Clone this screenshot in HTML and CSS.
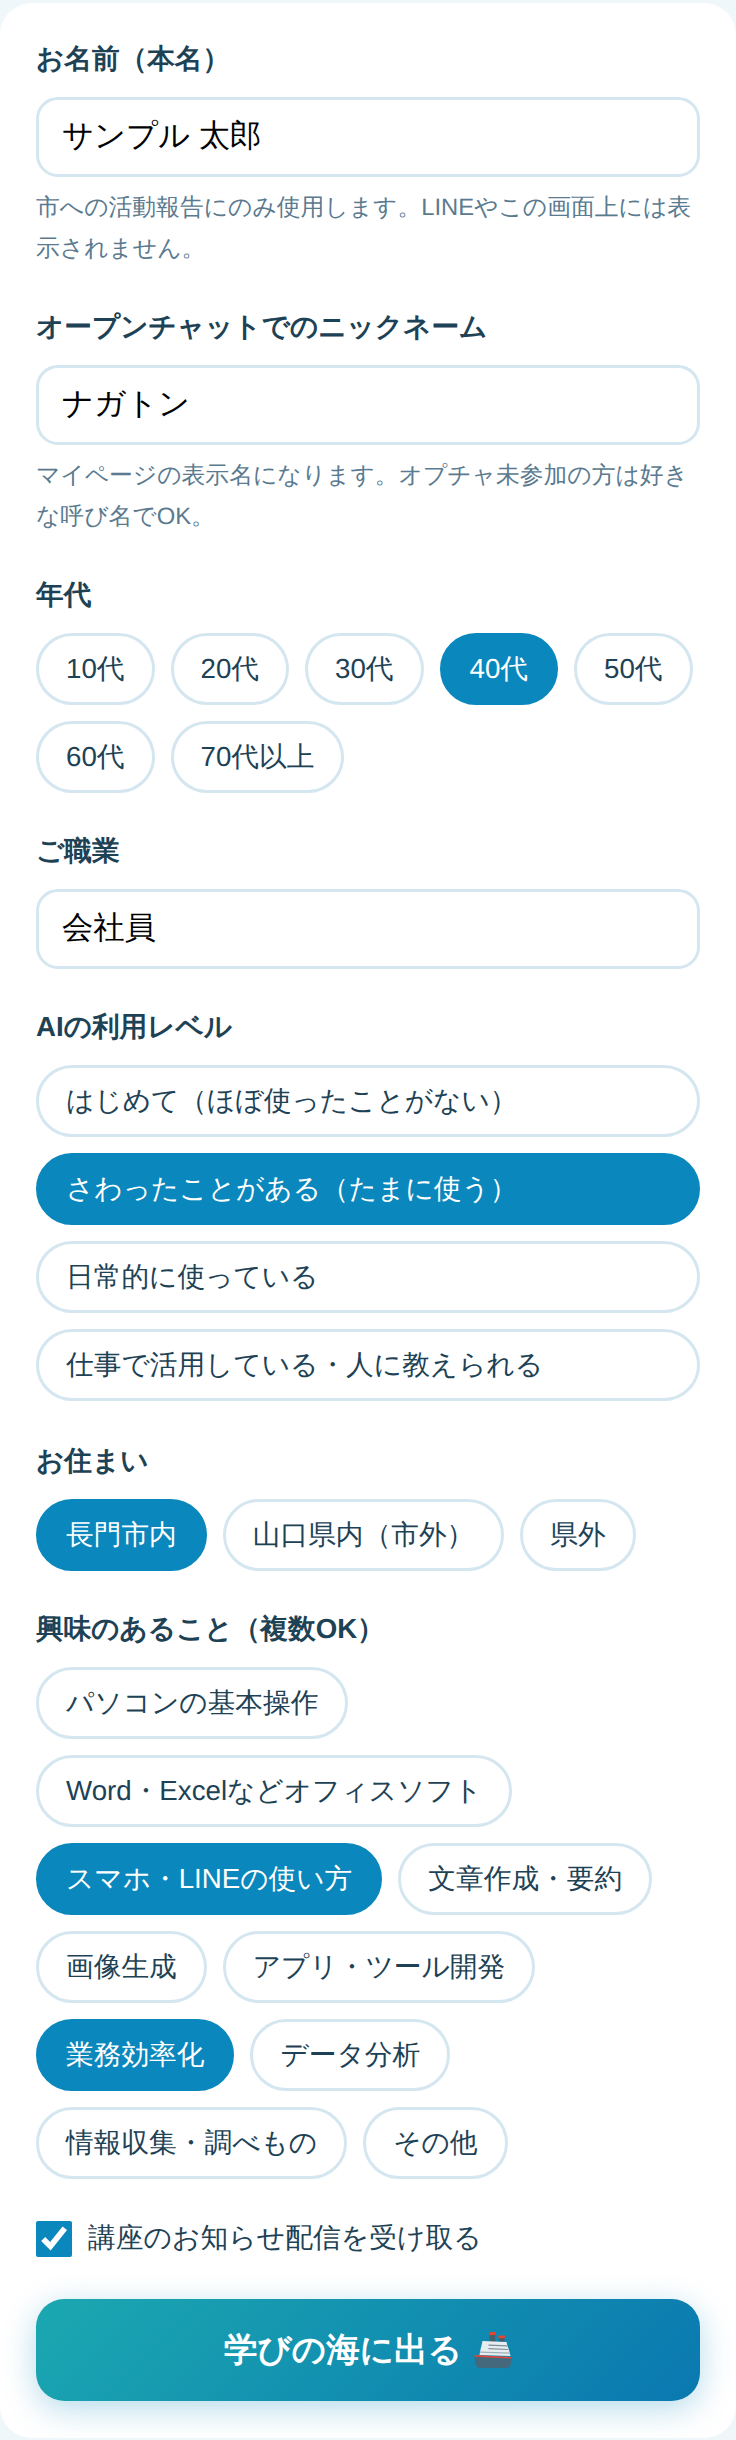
FILE: index.html
```html
<!DOCTYPE html>
<html lang="ja">
<head>
  <meta charset="UTF-8" />
  <meta name="viewport" content="width=device-width, initial-scale=1.0" />
  <title>プロフィール登録</title>
  <link rel="stylesheet" href="styles.css">
</head>
<body>
  <form class="card">
    <div class="field">
      <label class="field-label">お名前（本名）</label>
      <input class="text-input" type="text" value="サンプル 太郎">
      <p class="hint">市への活動報告にのみ使用します。LINEやこの画面上には表示されません。</p>
    </div>

    <div class="field">
      <label class="field-label">オープンチャットでのニックネーム</label>
      <input class="text-input" type="text" value="ナガトン">
      <p class="hint">マイページの表示名になります。オプチャ未参加の方は好きな呼び名でOK。</p>
    </div>

    <div class="field">
      <label class="field-label">年代</label>
      <div class="chips">
        <button type="button" class="chip">10代</button>
        <button type="button" class="chip">20代</button>
        <button type="button" class="chip">30代</button>
        <button type="button" class="chip active">40代</button>
        <button type="button" class="chip">50代</button>
        <button type="button" class="chip">60代</button>
        <button type="button" class="chip">70代以上</button>
      </div>
    </div>

    <div class="field">
      <label class="field-label">ご職業</label>
      <input class="text-input" type="text" value="会社員">
    </div>

    <div class="field">
      <label class="field-label">AIの利用レベル</label>
      <div class="chips stacked">
        <button type="button" class="chip">はじめて（ほぼ使ったことがない）</button>
        <button type="button" class="chip active">さわったことがある（たまに使う）</button>
        <button type="button" class="chip">日常的に使っている</button>
        <button type="button" class="chip">仕事で活用している・人に教えられる</button>
      </div>
    </div>

    <div class="field">
      <label class="field-label">お住まい</label>
      <div class="chips">
        <button type="button" class="chip active">長門市内</button>
        <button type="button" class="chip">山口県内（市外）</button>
        <button type="button" class="chip">県外</button>
      </div>
    </div>

    <div class="field">
      <label class="field-label">興味のあること（複数OK）</label>
      <div class="chips">
        <button type="button" class="chip">パソコンの基本操作</button>
        <button type="button" class="chip">Word・Excelなどオフィスソフト</button>
        <button type="button" class="chip active">スマホ・LINEの使い方</button>
        <button type="button" class="chip">文章作成・要約</button>
        <button type="button" class="chip">画像生成</button>
        <button type="button" class="chip">アプリ・ツール開発</button>
        <button type="button" class="chip active">業務効率化</button>
        <button type="button" class="chip">データ分析</button>
        <button type="button" class="chip">情報収集・調べもの</button>
        <button type="button" class="chip">その他</button>
      </div>
    </div>

    <label class="check-row">
      <input type="checkbox" checked>
      <span>講座のお知らせ配信を受け取る</span>
    </label>

    <button type="button" class="submit">
      <span>学びの海に出る</span>
      <!-- ship emoji -->
      <svg class="ship" viewBox="0 0 37 36" width="38" height="36" aria-hidden="true">
        <rect x="15" y="1" width="5.700" height="9" fill="#44606f"/>
        <rect x="14.500" y="0" width="6.700" height="3" rx="1" fill="#e8432f"/>
        <rect x="24.300" y="4" width="5.700" height="7" fill="#44606f"/>
        <rect x="23.800" y="3.500" width="6.700" height="2.800" rx="1" fill="#e8432f"/>
        <path d="M8 9 L32 10 L33 14 L34.500 18 L36 24 L5 23 L6 17.500 L7 13.500 Z" fill="#e6ecef"/>
        <path d="M14 12.500 L32.500 13.300 L32.800 14.500 L14 13.700 Z" fill="#7d8f9b"/>
        <path d="M14 16 L33.500 16.900 L33.800 18 L14 17.200 Z" fill="#7d8f9b"/>
        <path d="M5.800 19.500 L35 20.500 L35.300 21.800 L5.500 20.800 Z" fill="#9fb0ba"/>
        <path d="M0 23.500 L36.700 25.500 L36.500 32 Q36 36 32 36 L6 36 Q2 36 0.800 31 Z" fill="#44687c"/>
        <path d="M0 23 L36.700 25 L36.700 26.500 L0.200 24.800 Z" fill="#e5453a"/>
      </svg>
    </button>
  </form>
</body>
</html>
```

FILE: styles.css
```css
/* Page */
body {
  margin: 0;
  padding-top: 3px;
  background: #f0f7fb;
  font-family: "Liberation Sans", sans-serif;
  color: #1e4255;
  text-rendering: geometricPrecision;
}
.card {
  background: #fff;
  border-radius: 32px;
  padding: 38px 36px 36px;
  height: 2435px;
  box-sizing: border-box;
}

/* Fields */
.field {
  margin-bottom: 40px;
}
.field-label {
  display: block;
  font-size: 27.65px;
  font-weight: 700;
  line-height: 36px;
  margin-bottom: 20px;
}
.text-input {
  display: block;
  width: 100%;
  height: 80px;
  box-sizing: border-box;
  padding: 0 23px;
  border: 3px solid #d4e6f0;
  border-radius: 22px;
  background: #fff;
  font-family: inherit;
  font-size: 31.3px;
  color: #000;
  text-rendering: geometricPrecision;
}
.hint {
  margin: 10px 0 0;
  font-size: 23.8px;
  line-height: 41px;
  color: #5a7a8f;
}

/* Option chips */
.chips {
  display: flex;
  flex-wrap: wrap;
  gap: 16px;
}
.chips.stacked {
  flex-direction: column;
  margin-bottom: 42px;
}
.chip {
  height: 72px;
  padding: 0 27px;
  border: 3px solid #d4e6f0;
  border-radius: 36px;
  background: #fff;
  font-family: inherit;
  font-size: 27.7px;
  color: #1e4255;
  text-align: left;
  text-rendering: geometricPrecision;
}
.chip.active {
  background: #0a87bc;
  border-color: #0a87bc;
  color: #fff;
}

/* Checkbox row */
.check-row {
  display: flex;
  align-items: center;
  gap: 16px;
  margin: 41px 0 42px;
  font-size: 27.8px;
}
.check-row input {
  width: 36px;
  height: 36px;
  margin: 0;
  accent-color: #0a87bc;
}

/* Submit */
.submit {
  display: flex;
  align-items: center;
  justify-content: center;
  gap: 12px;
  width: 100%;
  height: 102px;
  border: 0;
  border-radius: 28px;
  background: linear-gradient(135deg, #1ba8b0, #0a78b0);
  box-shadow: 0 8px 32px rgba(10, 135, 188, 0.3);
  font-family: inherit;
  font-size: 33.6px;
  font-weight: 700;
  color: #fff;
  text-rendering: geometricPrecision;
}
```
